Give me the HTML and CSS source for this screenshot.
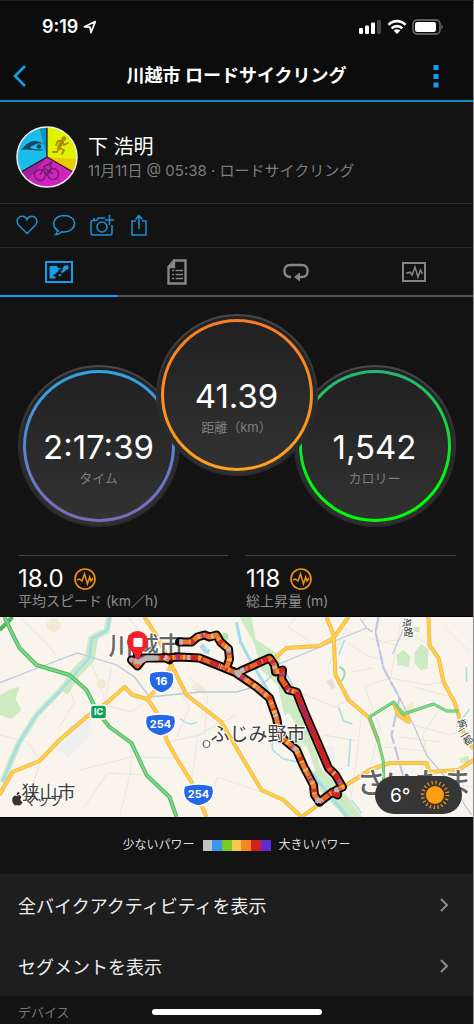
FILE: index.html
```html
<!DOCTYPE html>
<html lang="ja">
<head>
    <meta charset="UTF-8">
    <meta name="viewport" content="width=device-width, initial-scale=1.0">
    <title>川越市 ロードサイクリング</title>
    <link rel="stylesheet" href="styles.css">
</head>
<body>
    <div class="app">
        <div class="status-bar">
            <div class="clock">
                <span>9:19</span>
                <svg width="14" height="14" viewBox="0 0 14 14"><path d="M1.5 6.8 12.3 1.6 8 12.5 7 7.2Z" fill="none" stroke="#fff" stroke-width="1.7" stroke-linejoin="round"/></svg>
            </div>
            <div class="status-icons">
                <svg width="24" height="16" viewBox="0 0 24 16">
                    <rect x="1" y="9" width="4" height="6" rx="1.2" fill="#fff"/>
                    <rect x="7" y="6.5" width="4" height="8.5" rx="1.2" fill="#fff"/>
                    <rect x="13" y="3.5" width="4" height="11.5" rx="1.2" fill="#fff"/>
                    <rect x="19" y="1" width="4" height="14" rx="1.2" fill="#444"/>
                </svg>
                <svg width="20" height="16" viewBox="0 0 20 16" fill="none" stroke="#fff" stroke-width="2.6">
                    <path d="M1.5 5.8C6.4.9 13.6.9 18.5 5.800M4.600 9.400c3.100-3 7.700-3 10.800 0"/>
                    <path d="M6.600 11.600c2-1.700 4.800-1.700 6.800 0L10 15Z" fill="#fff" stroke="none"/>
                </svg>
                <svg width="31" height="16" viewBox="0 0 31 16">
                    <rect x="1" y="1" width="27" height="14" rx="4" fill="none" stroke="#777" stroke-width="1.3"/>
                    <rect x="3" y="3" width="21" height="10" rx="2.2" fill="#fff"/>
                    <path d="M29.500 5.500c1.600.9 1.600 4.100 0 5z" fill="#777"/>
                </svg>
            </div>
        </div>

        <header class="title-bar">
            <button class="icon-button back" aria-label="戻る">
                <svg width="14" height="24" viewBox="0 0 14 24"><path d="M12 2 2 12 12 22" fill="none" stroke="#11a0f0" stroke-width="2.6"/></svg>
            </button>
            <h1>川越市 ロードサイクリング</h1>
            <button class="icon-button more" aria-label="メニュー">
                <svg width="6" height="24" viewBox="0 0 6 24" fill="#11a0f0"><path d="M.5 1h5v5h-5zM.5 10h5v5h-5zM.5 18.500h5v5h-5z"/></svg>
            </button>
        </header>

        <section class="profile">
            <svg class="avatar" viewBox="0 0 62 62">
                <circle cx="31" cy="31" r="30" fill="#1abcea"/>
                <path d="M31 31V1A30 30 0 0 1 57 46Z" fill="#dff200"/>
                <path d="M31 31 60 33A30 30 0 0 1 57 46Z" fill="#eccb00"/>
                <path d="M31 31V1A30 30 0 0 0 23.500 2Z" fill="#108fb8"/>
                <path d="M31 31 57 46A30 30 0 0 1 5 46Z" fill="#d222bd"/>
                <path d="M31 31 5 46A30 30 0 0 0 12 54Z" fill="#a01f9b"/>
                <path d="M31 1V31L5 46M31 31 57 46" fill="none" stroke="#222" stroke-width="1.3"/>
                <path d="M5 24c5-6 9-9 14-9 4 0 6 2 9 2-4 1-6 0-8 1l-6 3c1 2 4 2 6 2 3 1 6 0 8 1-7 2-15-2-23 0z" fill="#15465c"/>
                <circle cx="23" cy="20.500" r="2.200" fill="#15465c"/>
                <g fill="none" stroke="#aa8a00" stroke-width="1.8" stroke-linecap="round" stroke-linejoin="round">
                    <path d="m46 15-3 7 5 2-2 4M43 22l-2 4h-4M40 19l2-4 4 0 2 4 4-2" />
                    <path d="m46 15-3 7" stroke-width="3.500"/>
                </g>
                <circle cx="48" cy="12.500" r="2.300" fill="#aa8a00"/>
                <g fill="none" stroke="#6c1d72" stroke-width="1.4">
                    <circle cx="24" cy="49" r="5.500"/>
                    <circle cx="37" cy="48" r="5.500"/>
                    <path d="m24 49 4-7 9 6M27 44l4 5 4-5M27 41l6-3 3 4"/>
                </g>
                <circle cx="35" cy="37" r="1.600" fill="#6c1d72"/>
                <circle cx="31" cy="31" r="30" fill="none" stroke="#eee" stroke-width="1.5"/>
            </svg>
            <div>
                <div class="name">下 浩明</div>
                <div class="meta">11月11日 @ 05:38 · ロードサイクリング</div>
            </div>
        </section>

        <div class="actions">
            <button class="icon-button" aria-label="いいね">
                <svg width="22" height="22" viewBox="0 0 22 22"><path d="M11 19.500 2.500 11C-1 6 3 1.800 6.500 2.200 9 2.500 10.500 4 11 5.500c.5-1.500 2-3 4.500-3.300C19 1.800 23 6 19.500 11Z"/></svg>
            </button>
            <button class="icon-button" aria-label="コメント">
                <svg width="24" height="22" viewBox="0 0 24 22"><path d="M7 17.200C-1.500 13 .5 2 12 1.500c6 0 10.500 3.300 10.500 8S18 18 12 18c-1 0-1.600 0-2.300-.3C8.500 19 6.500 20.500 3.500 20.500 5 19.500 5.500 18.300 5.300 16.300"/></svg>
            </button>
            <button class="icon-button" aria-label="写真を追加">
                <svg width="24" height="22" viewBox="0 0 24 22"><path d="M15 4H8L6.500 6.500H3Q1 6.500 1 8.500V19q0 2 2 2h17q2 0 2-2v-8M19.500 1v10M15 6h9M3 5h2"/><circle cx="12" cy="13" r="5"/></svg>
            </button>
            <button class="icon-button" aria-label="共有">
                <svg width="22" height="22" viewBox="0 0 22 22"><path d="M8 7H4v14h14V7h-4M11 15V2M7.500 5.500 11 1.500l3.500 4"/></svg>
            </button>
        </div>

        <nav class="tabs">
            <button class="tab active" aria-label="概要">
                <svg width="28" height="22" viewBox="0 0 28 22"><rect x="1" y="1" width="26" height="20" fill="none" stroke="currentColor" stroke-width="2"/><path d="M4.500 5H12l1 2h3l-1 1.500h-2l1 1.500-2 1-1 2H9l-1 2 3 1-1 1.500H4.500zM18 6l2-1.500h3.500V8L21 9l-2 2-2 1-1.500-1 2-2zM13 14l3-1 1 1-3 1.500z" fill="currentColor"/></svg>
            </button>
            <button class="tab" aria-label="詳細">
                <svg width="20" height="26" viewBox="0 0 20 26"><path d="M7 1.500h11.500v23h-17V8L7 1.500V8H1.500" fill="none" stroke="currentColor" stroke-width="2.4"/><path d="M2 7 7 2v5z" fill="currentColor"/><path d="M5 11.500h2M8.500 11.500H16M5 15.500h2M8.500 15.500H16M5 19.500h2M8.500 19.500H16" stroke="currentColor" stroke-width="1.6"/></svg>
            </button>
            <button class="tab" aria-label="ラップ">
                <svg width="26" height="20" viewBox="0 0 26 20"><path d="M8 15H7C-.5 15-.5 3 7 3h12c7.500 0 7.500 12 0 12h-3" fill="none" stroke="currentColor" stroke-width="2.4"/><path d="m11 15 6-4.500v9z" fill="currentColor"/></svg>
            </button>
            <button class="tab" aria-label="グラフ">
                <svg width="24" height="20" viewBox="0 0 24 20"><rect x="1" y="1" width="22" height="18" fill="none" stroke="currentColor" stroke-width="2"/><path d="M4 11h2l2-1 2 3 3-8 3 10 2.500-7 2 4" fill="none" stroke="currentColor" stroke-width="1.5"/></svg>
            </button>
        </nav>

        <section class="dials">
            <div class="dial time">
                <div class="bezel"><div class="ring"><div class="face">
                    <span class="dial-value">2:17:39</span>
                    <span class="dial-label">タイム</span>
                </div></div></div>
            </div>
            <div class="dial distance">
                <div class="bezel"><div class="ring"><div class="face">
                    <span class="dial-value">41.39</span>
                    <span class="dial-label">距離（km）</span>
                </div></div></div>
            </div>
            <div class="dial calories">
                <div class="bezel"><div class="ring"><div class="face">
                    <span class="dial-value">1,542</span>
                    <span class="dial-label">カロリー</span>
                </div></div></div>
            </div>
        </section>

        <section class="stats">
            <div class="stat">
                <div class="stat-value">18.0
                    <svg width="22" height="22" viewBox="0 0 22 22" fill="none" stroke="#f29111"><circle cx="11" cy="11" r="10" stroke-width="1.6"/><path d="m3 12 2.500-1L8 13l2.500-7 3 10 2.200-7 1.300 4 2-3" stroke-width="1.5"/></svg>
                </div>
                <div class="stat-label">平均スピード (km／h)</div>
            </div>
            <div class="stat">
                <div class="stat-value">118
                    <svg width="22" height="22" viewBox="0 0 22 22" fill="none" stroke="#f29111"><circle cx="11" cy="11" r="10" stroke-width="1.6"/><path d="m3 12 2.500-1L8 13l2.500-7 3 10 2.200-7 1.300 4 2-3" stroke-width="1.5"/></svg>
                </div>
                <div class="stat-label">総上昇量 (m)</div>
            </div>
        </section>

        <section class="map">
            <svg class="map-canvas" viewBox="0 0 474 200" preserveAspectRatio="xMidYMid slice">
                <defs>
                    <path id="loop-east" d="M139 32 136 24 139 44 132 43 138 49 144 41 167 41 180 40 200 41 220 49 237 56 270 41 275 48 276 55 283 53 282 62 289 73 297 75 304 93 317 123 329 151 336 158 343 170 337 173 338 178 333 175 320 185"/>
                    <path id="loop-west" d="M320 185 315 178 314 168 305 151 297 133 284 122 279 112 277 101 270 81 257 70 238 57M180 25h12l6-5 7-2 5 2 7-2 4 7 8 7 1 10-3 9M165 40l5 3"/>
                    <g id="roads">
                        <path d="M0 178 13 155 40 144 60 123 87 100 107 86 125 70 133 78 148 82 163 65 172 48"/>
                        <path d="M145 0 158 20 172 48 187 78 222 105 237 131 262 173 284 183 302 200"/>
                        <path d="M148 82 157 95 168 125 177 141 192 165 207 200"/>
                        <path d="M327 0 334 18 336 58 349 83 370 101 379 125M349 0 334 21 320 29 287 31 272 44"/>
                        <path d="M429 0 430 28 439 41 444 65 455 85 467 125 474 131M302 200 320 187 344 170 370 153 390 146 427 146 430 155 459 153 474 143M394 86 399 98 409 105 408 99 400 94"/>
                    </g>
                    <path id="shield" d="M-14-9Q-8-11 0-11t14 2q3 8-2 14-5 5-12 6-7-1-12-6-5-6-2-14z"/>
                </defs>
                <rect width="474" height="200" fill="#f9f5ed"/>

                <!-- parks and built-up areas -->
                <g fill="#cdebc3">
                    <path d="M0 78 12 72 20 70 16 82 22 93 12 102 0 98z"/>
                    <path d="M240 0h12l4 22 12 8 13 9-2 14 10 22 16 22 8 24 8 30 24 25 18 24h-18l-24-26-9-26-22-28-12-52-16-15-8-28z"/>
                    <path d="M397 38 404 33 411 40 409 50 398 48zM415 35l7-8 7 5-1 20-7 1-6-7zM413 10h7v5h-7zM460 141l9-2 1 7h-9z"/>
                </g>
                <g fill="#f9f5ed"><path d="m281 100 9-4 8 14-1 8-8-4zM300 124l8 6 8 24-6 0z"/></g>
                <g fill="#eef0ef"><path d="m56 130 15-22 18-5 4 13-25 25z"/><path d="m319 133 15-5 2 13-14 7z"/></g>
                <g fill="#f5e9d6"><circle cx="102" cy="67" r="5"/><circle cx="54" cy="8" r="7"/><path d="m191 70 8-4 8 7-10 3zM403 90l11-5 1 12-10 5z"/></g>
                <path d="m327 65 5-4 4 8-3 4z" fill="#e2dfda"/>

                <!-- minor roads -->
                <g fill="none" stroke="#e9e6df" stroke-width="1">
                    <path d="M20 0 43 22 62 44M78 36 92 47 100 66 105 82M0 118 28 125 41 144 29 182M112 50 105 88 132 95 150 82M62 51 75 85 60 110M129 0 142 17M120 200 131 155 132 126M85 190 108 156 147 158M192 165 198 118 237 98M80 153 132 140 177 141M168 125 205 117 208 80 190 60M205 200 218 160 262 175M178 70 190 90 177 120"/>
                    <path d="M297 0 288 10 310 24M349 26 366 38 380 42M301 76 335 90 349 83M348 9 330 47M300 131 325 118 359 124M390 61 365 70 380 110 370 153M402 0 391 61 427 68 444 65M384 25 417 20 429 28M414 108 450 118 466 112M430 146 423 118 440 92M352 55 374 51M404 158 448 167 474 170M350 190 356 150 362 98M445 10 470 35M370 21 400 29M415 70 452 80M400 120 441 125M385 130 425 134"/>
                </g>

                <!-- rivers -->
                <g fill="none" stroke-linejoin="round">
                    <path d="M110 0 107 14 94 20 91 42 80 54 60 74 37 98 20 125 12 143 3 165" stroke="#cdeac5" stroke-width="6"/>
                    <path d="M94 20 90 42 76 56 64 75" stroke="#cdeac5" stroke-width="10"/>
                    <path d="M110 0 108 13 92 22 90 41 79 53 60 75 37 98 20 125 12 143 3 165" stroke="#a3dcea" stroke-width="2.5"/>
                    <path d="M237 5 241 25 249 40 267 71 280 98 284 121 304 145 324 171 348 200" stroke="#a3dcea" stroke-width="3"/>
                    <path d="M285 52 294 70M272 110 273 133 284 142 298 145M352 183 362 196M345 23 339 38M339 90 344 104 353 107M351 122 349 150M181 102q10 8 16 3M470 92l-13 18M467 50v15" stroke="#a9deeb" stroke-width="1.6"/>
                    <path d="M340 50q9 4 2 14" stroke="#91d8b1" stroke-width="2"/>
                    <path d="m202 28 4 6 4 1" stroke="#a9deeb" stroke-width="5"/>
                    <circle cx="225" cy="20" r="4" fill="#b7e2a9"/>
                </g>

                <!-- railways -->
                <g fill="none" stroke="#bac8e0" stroke-width="1.3">
                    <path d="M0 66 33 53 78 36 117 48 135 60 150 80 200 75 237 75 262 68 273 58M277 48 340 22 367 11 373 15M367 11 361 2M393 37 405 10"/>
                    <path d="M379 0 376 15 384 51 400 81 414 108 427 138 450 165 472 198"/>
                    <path d="M379 0 376 15 384 51 400 81 392 118 404 160" stroke="#c3c4ed" stroke-width="2.2" stroke-dasharray="14 3"/>
                </g>

                <!-- main roads -->
                <g fill="none" stroke-linejoin="round">
                    <use href="#roads" stroke="#f0ae62" stroke-width="4"/>
                    <use href="#roads" stroke="#ffd13f" stroke-width="2.6"/>
                    <g stroke="#51b95f" stroke-width="4">
                        <path d="M5 0 12 15 20 31 37 48 70 58 87 73 98 95 110 110 132 126 147 158 170 180 177 200M0 13 13 0"/>
                        <path d="M370 100 394 85 404 97 434 87 447 94 459 94M370 100 379 125 384 145 384 165" stroke-width="3"/>
                    </g>
                    <path d="M5 0 12 15 20 31 37 48 70 58 87 73 98 95 110 110 132 126 147 158 170 180 177 200M370 100 394 85 404 97 434 87 447 94 459 94M370 100 379 125 384 145 384 165" stroke="#7bd886" stroke-width="2"/>
                </g>

                <!-- place names under the track -->
                <g class="place">
                    <text x="109" y="38" font-size="25" class="big-place">川越市</text>
                    <text x="357" y="177" font-size="29" class="big-place">さいたま市</text>
                </g>

                <!-- road signs -->
                <rect x="91" y="88" width="16" height="14" rx="3" fill="#12a058" stroke="#fff" stroke-width="1.5"/>
                <text class="sign" x="99" y="98" font-size="9">IC</text>
                <g class="shields">
                    <use href="#shield" transform="translate(162 65) scale(.82 1)"/>
                    <use href="#shield" transform="translate(161 108)"/>
                    <use href="#shield" transform="translate(199 178)"/>
                </g>
                <text class="sign" x="162" y="68" font-size="11">16</text>
                <text class="sign" x="161" y="111" font-size="11">254</text>
                <text class="sign" x="199" y="181" font-size="11">254</text>

                <!-- recorded track, coloured by power -->
                <g fill="none" stroke-linejoin="round">
                    <use href="#loop-east" stroke="#080808" stroke-width="9" stroke-linecap="round"/>
                    <use href="#loop-west" stroke="#080808" stroke-width="9" stroke-linecap="round"/>
                    <use href="#loop-east" stroke="#e8602a" stroke-width="5"/>
                    <use href="#loop-east" stroke="#cf2420" stroke-width="5" stroke-dasharray="7 3 2 8 12 5 3 11"/>
                    <use href="#loop-east" stroke="#f4a43d" stroke-width="5" stroke-dasharray="2 13 3 19 1 9"/>
                    <use href="#loop-west" stroke="#f0782c" stroke-width="5"/>
                    <use href="#loop-west" stroke="#d53324" stroke-width="5" stroke-dasharray="2 9 4 13 1 6"/>
                    <use href="#loop-west" stroke="#fbb04b" stroke-width="5" stroke-dasharray="3 7 1 9 2 12"/>
                    <g stroke="#8f3bb5" stroke-width="5" stroke-dasharray="1 23 2 37"><use href="#loop-east"/><use href="#loop-west"/></g>
                    <g stroke="#b8b5c4" stroke-width="5" stroke-dasharray="3 32 1 21 4 37"><use href="#loop-east"/><use href="#loop-west"/></g>
                    <path d="m297 75 7 18 13 30 12 28" stroke="#cc2023" stroke-width="5"/>
                    <path d="m302 88 3 7 3 8M312 112l3 6" stroke="#772baa" stroke-width="4" stroke-dasharray="2 5"/>
                    <path d="M134 44 140 45 147 41 159 41M235 56l7-1M316 183l6 1" stroke="#b8b4b4" stroke-width="5"/>
                </g>

                <g class="place">
                    <circle cx="207" cy="127" r="3.500" fill="#fff" stroke="#555"/>
                    <text x="211" y="124" font-size="19">ふじみ野市</text>
                    <text x="22" y="182" font-size="18">狭山市</text>
                    <text x="402" y="9" font-size="10" transform="rotate(10 402 9)">道</text>
                    <text x="404" y="19" font-size="10">路</text>
                    <text x="459" y="112" font-size="10" transform="rotate(-15 459 112)">第</text>
                    <text x="461" y="121" font-size="10" transform="rotate(-30 461 121)">二</text>
                    <text x="466" y="129" font-size="10" transform="rotate(-30 466 129)">都</text>
                    <text x="24" y="188" font-size="13" class="map-brand">マップ</text>
                </g>
                <path d="M17 179c2-1 4-1 5 1-2 2-1 4 1 5-1 3-3 4-5 3-2 1-4 0-5-3-1-4 1-7 4-6zm0-1c0-2 1-3 3-3 0 2-1 3-3 3z" fill="#333"/>
                <path d="M138 43C136 36 127.500 33 127.500 24.500a10.500 10.500 0 0 1 21 0C148.500 33 140 36 138 43Z" fill="#f2202c"/>
                <rect x="134" y="21" width="9" height="9" rx="1" fill="#fff"/>
            </svg>
            <div class="weather">
                <span>6°</span>
                <svg width="30" height="30" viewBox="-15 -15 30 30">
                    <circle r="9" fill="#ff9f0f"/>
                    <circle r="12.400" fill="none" stroke="#f59a13" stroke-width="3.6" stroke-dasharray="1.2 2.7"/>
                </svg>
            </div>
        </section>

        <div class="legend">
            <span>少ないパワー</span>
            <div class="scale">
                <i class="p1"></i><i class="p2"></i><i class="p3"></i><i class="p4"></i><i class="p5"></i><i class="p6"></i><i class="p7"></i>
            </div>
            <span>大きいパワー</span>
        </div>

        <div class="links">
            <a href="#activities">全バイクアクティビティを表示
                <svg width="9" height="14" viewBox="0 0 9 14"><path d="m1 1 6 6-6 6" fill="none" stroke="#8d8d8d" stroke-width="2"/></svg>
            </a>
            <a href="#segments">セグメントを表示
                <svg width="9" height="14" viewBox="0 0 9 14"><path d="m1 1 6 6-6 6" fill="none" stroke="#8d8d8d" stroke-width="2"/></svg>
            </a>
        </div>

        <h2 class="section-title">デバイス</h2>
        <div class="home-indicator"></div>
    </div>
</body>
</html>
```
FILE: styles.css
```css
* {
    box-sizing: border-box;
}

body {
    margin: 0;
    background: #131313;
    color: #fff;
    font-family: Inter, "Noto Sans CJK JP", sans-serif;
}

svg {
    display: block;
    flex-shrink: 0;
}

.app {
    min-height: 100vh;
    border-top: 1px solid #222;
    border-right: 1px solid #8a8a8a;
}

button {
    font-family: inherit;
    cursor: pointer;
}

.icon-button {
    padding: 0;
    border: none;
    background: none;
}

/* Top bars */
.status-bar {
    display: flex;
    justify-content: space-between;
    align-items: center;
    height: 51px;
    padding: 0 30px 0 42px;
    background: #0c0c0c;
}

.clock {
    display: flex;
    align-items: center;
    gap: 5px;
    font-size: 18px;
    font-weight: 600;
}

.status-icons {
    display: flex;
    gap: 5px;
}

.title-bar {
    display: grid;
    grid-template-columns: 60px 1fr 60px;
    align-items: center;
    height: 50px;
    padding: 0 7px;
    background: #0c0c0c;
    border-bottom: 2px solid #168cc5;
}

.title-bar h1 {
    margin: 0;
    font-size: 18px;
    font-weight: 600;
    line-height: 26px;
    text-align: center;
}

.back {
    padding-left: 6px;
}

.more svg {
    margin: 0 auto;
}

/* Owner of the activity */
.profile {
    display: flex;
    align-items: center;
    gap: 10px;
    height: 102px;
    padding: 8px 16px 0;
    border-bottom: 1px solid #2a2a2a;
}

.avatar {
    width: 62px;
    height: 62px;
}

.name {
    font-size: 20px;
    line-height: 28px;
}

.meta {
    font-size: 15px;
    line-height: 20px;
    color: #7d7d7d;
}

.actions {
    display: flex;
    align-items: center;
    gap: 14px;
    height: 44px;
    padding: 0 16px 2px;
    border-bottom: 1px solid #2a2a2a;
}

.actions svg {
    fill: none;
    stroke: #1c92d2;
    stroke-width: 1.5;
}

/* Tabs */
.tabs {
    display: grid;
    grid-template-columns: repeat(4, 1fr);
    height: 49px;
}

.tab {
    display: flex;
    justify-content: center;
    align-items: center;
    padding: 0;
    border: none;
    border-bottom: 2px solid #555;
    background: none;
    color: #858585;
}

.tab.active {
    color: #11a0f0;
    border-color: #11a0f0;
}

/* Dials */
.dials {
    display: flex;
    justify-content: center;
    padding: 17px 0 28px;
}

.dial {
    width: 162px;
    height: 162px;
    padding: 2px;
    border-radius: 50%;
    background: linear-gradient(#494949, #292929 60%, #2b2b2b);
}

.dial.time,
.dial.calories {
    margin-top: 51px;
}

.dial.distance {
    margin: 0 -24px;
    z-index: 1;
}

.bezel,
.ring,
.face {
    height: 100%;
    border-radius: 50%;
}

.bezel {
    padding: 3px;
    background: linear-gradient(#202325, #303030);
}

.ring {
    padding: 3px;
}

.time .ring {
    background: linear-gradient(#2ca5e3, #8069b9);
}

.distance .ring {
    background: linear-gradient(#fa7b24, #ffa31d);
}

.calories .ring {
    background: linear-gradient(#29b473, #00fb0b 75%);
}

.face {
    display: flex;
    flex-direction: column;
    align-items: center;
    padding-top: 54px;
    background: linear-gradient(#212121, #323232);
}

.dial-value {
    font-size: 33px;
    line-height: 40px;
}

.dial-label {
    font-size: 13px;
    line-height: 22px;
    color: #7d7d7d;
}

/* Stats */
.stats {
    display: grid;
    grid-template-columns: 1fr 1fr;
    gap: 18px;
    padding: 0 17px 6px 18px;
}

.stat {
    border-top: 1px solid #444;
    padding-top: 10px;
}

.stat-value {
    display: flex;
    align-items: center;
    gap: 10px;
    font-size: 24px;
    line-height: 26px;
}

.stat-label {
    font-size: 14px;
    line-height: 18px;
    color: #8c8c8c;
}

/* Map */
.map {
    position: relative;
    border-top: 1px solid #000;
    border-bottom: 1px solid #000;
}

.map-canvas {
    width: 100%;
    height: 200px;
}

.sign {
    fill: #fff;
    font-weight: 700;
    text-anchor: middle;
}

.shields {
    fill: #2467e8;
    stroke: #fff;
    stroke-width: 1.5;
}

.place text {
    fill: #3c3c3c;
    stroke: #fff;
    stroke-width: 2;
    paint-order: stroke;
}

.place .big-place {
    fill: #656565;
    font-weight: 500;
}

.place .map-brand {
    stroke: none;
}

.weather {
    position: absolute;
    right: 11px;
    bottom: 3px;
    display: flex;
    align-items: center;
    justify-content: space-between;
    width: 87px;
    height: 38px;
    padding: 0 12px 0 15px;
    border-radius: 19px;
    background: #363636;
    font-size: 19px;
}

/* Power legend */
.legend {
    display: flex;
    justify-content: center;
    align-items: center;
    gap: 8px;
    height: 56px;
    padding-bottom: 2px;
    font-size: 12px;
    line-height: 16px;
    color: #ddd;
}

.scale {
    display: flex;
    width: 68px;
    height: 11px;
}

.scale i {
    flex: 1;
}

.p1 { background: #c2c2c2; }
.p2 { background: #3d96ed; }
.p3 { background: #7aca20; }
.p4 { background: #fac84a; }
.p5 { background: #f88620; }
.p6 { background: #d22023; }
.p7 { background: #5e2bd6; }

/* Links */
.links {
    background: #1e1e1e;
}

.links a {
    display: flex;
    justify-content: space-between;
    align-items: center;
    height: 61px;
    padding: 0 24px 0 18px;
    color: #eee;
    font-size: 18px;
    text-decoration: none;
}

.section-title {
    margin: 0;
    padding: 5px 18px 0;
    font-size: 13px;
    font-weight: 400;
    line-height: 22px;
    color: #777;
}

.home-indicator {
    position: fixed;
    bottom: 9px;
    left: 50%;
    width: 170px;
    height: 6px;
    margin-left: -85px;
    border-radius: 3px;
    background: #fff;
}
```
